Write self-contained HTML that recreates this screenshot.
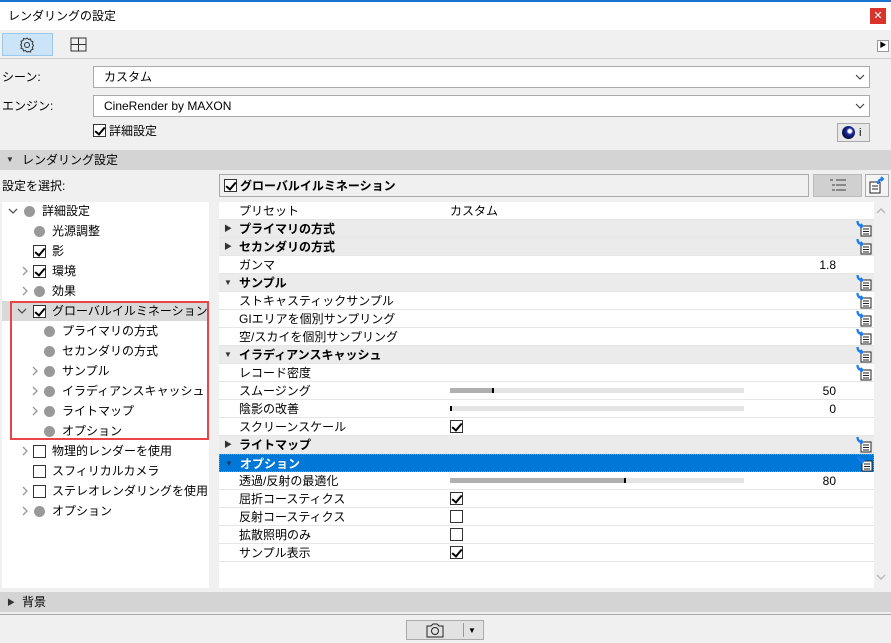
<!DOCTYPE html>
<html><head><meta charset="utf-8"><style>
*{box-sizing:border-box;margin:0;padding:0}
body{width:891px;height:643px;overflow:hidden;background:#f0f0f0;font-family:"Liberation Sans","Noto Sans CJK JP",sans-serif;font-size:12px;color:#000;position:relative}
.a{position:absolute}
.t{position:absolute;white-space:nowrap;line-height:14px}
.cb{position:absolute;width:13px;height:13px;border:1px solid #333;background:#fff}
.cb.on::after{content:"";position:absolute;left:3px;top:0px;width:4px;height:8px;border:solid #000;border-width:0 2px 2px 0;transform:rotate(40deg)}
.dot{position:absolute;width:11px;height:11px;border-radius:50%;background:#999}
.chev{position:absolute;width:10px;height:10px}
.row{position:absolute;left:219px;width:655px;height:18px;border-bottom:1px solid #e6e6e6;background:#fff}
.row.h{background:#ebebeb;font-weight:bold}
.ic{position:absolute;left:637px;top:1px;width:16px;height:16px}
.sl{position:absolute;left:231px;top:6px;width:294px;height:5px;background:#e4e4e4}
</style></head><body>
<div class="a" style="left:0;top:0;width:891px;height:2px;background:#1a73d0"></div>
<div class="a" style="left:0;top:2px;width:891px;height:28px;background:#fff"></div>
<div class="t" style="left:8px;top:9px">レンダリングの設定</div>
<div class="a" style="left:870px;top:8px;width:16px;height:16px;background:#d9342b;color:#fff;font-size:11px;text-align:center;line-height:16px">✕</div>
<div class="a" style="left:2px;top:33px;width:51px;height:23px;background:#cce4f7;border:1px solid #99c9ef"></div>
<svg class="a" style="left:18px;top:36px" width="18" height="18" viewBox="0 0 18 18"><circle cx="9" cy="9" r="2.5" fill="none" stroke="#333"/><path d="M9 2l1.5 1.5 2-.5.5 2 2 .8-.7 2 1.2 1.7-1.2 1.7.7 2-2 .8-.5 2-2-.5L9 16l-1.5-1.5-2 .5-.5-2-2-.8.7-2L2.5 9l1.2-1.7-.7-2 2-.8.5-2 2 .5z" fill="none" stroke="#333"/></svg>
<svg class="a" style="left:70px;top:37px" width="18" height="16"><rect x="1" y="1" width="15" height="13" fill="none" stroke="#333"/><path d="M8.5 1v13M1 7.5h15" stroke="#333"/></svg>
<div class="a" style="left:877px;top:40px;width:12px;height:12px;border:1px solid #999;background:#fff;font-size:7px;line-height:10px;text-align:center">▶</div>
<div class="a" style="left:0;top:58px;width:891px;height:1px;background:#ccc"></div>
<div class="t" style="left:2px;top:70px">シーン:</div>
<div class="a" style="left:93px;top:66px;width:777px;height:22px;background:#fff;border:1px solid #aaa"></div>
<div class="t" style="left:104px;top:70px">カスタム</div>
<svg class="a" style="left:855px;top:74px" width="10" height="6"><path d="M1 1l4 4 4-4" fill="none" stroke="#333"/></svg>
<div class="t" style="left:2px;top:99px">エンジン:</div>
<div class="a" style="left:93px;top:95px;width:777px;height:22px;background:#fff;border:1px solid #aaa"></div>
<div class="t" style="left:104px;top:99px">CineRender by MAXON</div>
<svg class="a" style="left:855px;top:103px" width="10" height="6"><path d="M1 1l4 4 4-4" fill="none" stroke="#333"/></svg>
<div class="cb on" style="left:93px;top:124px"></div>
<div class="t" style="left:109px;top:124px">詳細設定</div>
<div class="a" style="left:837px;top:123px;width:33px;height:19px;border:1px solid #aaa;background:#e8e8e8"></div>
<div class="a" style="left:842px;top:126px;width:13px;height:13px;border-radius:50%;background:radial-gradient(circle at 60% 40%,#fff 0 15%,#1a2a9a 30%,#0a0a40 70%)"></div>
<div class="t" style="left:859px;top:126px;font-size:11px">i</div>
<div class="a" style="left:0;top:150px;width:891px;height:20px;background:#d4d4d4"></div>
<div class="t" style="left:6px;top:153px;font-size:8px;color:#333">▼</div>
<div class="t" style="left:22px;top:153px">レンダリング設定</div>
<div class="t" style="left:2px;top:179px">設定を選択:</div>
<div class="a" style="left:2px;top:202px;width:207px;height:386px;background:#fff"></div>
<div class="a" style="left:2px;top:301px;width:207px;height:20px;background:#d9d9d9"></div>
<div class="a" style="left:10px;top:301px;width:199px;height:139px;border:2px solid #e8444a"></div>
<!-- tree -->
<svg class="chev" style="left:8px;top:206px"><path d="M1 3l4 4 4-4" fill="none" stroke="#555" stroke-width="1.3"/></svg><div class="dot" style="left:24px;top:206px"></div><div class="t" style="left:42px;top:204px">詳細設定</div>
<div class="dot" style="left:34px;top:226px"></div><div class="t" style="left:52px;top:224px">光源調整</div>
<div class="cb on" style="left:33px;top:245px"></div><div class="t" style="left:52px;top:244px">影</div>
<svg class="chev" style="left:20px;top:266px"><path d="M3 1l4 4-4 4" fill="none" stroke="#999" stroke-width="1.3"/></svg><div class="cb on" style="left:33px;top:265px"></div><div class="t" style="left:52px;top:264px">環境</div>
<svg class="chev" style="left:20px;top:286px"><path d="M3 1l4 4-4 4" fill="none" stroke="#999" stroke-width="1.3"/></svg><div class="dot" style="left:34px;top:286px"></div><div class="t" style="left:52px;top:284px">効果</div>
<svg class="chev" style="left:17px;top:306px"><path d="M1 3l4 4 4-4" fill="none" stroke="#555" stroke-width="1.3"/></svg><div class="cb on" style="left:33px;top:305px"></div><div class="t" style="left:52px;top:304px">グローバルイルミネーション</div>
<div class="dot" style="left:44px;top:326px"></div><div class="t" style="left:62px;top:324px">プライマリの方式</div>
<div class="dot" style="left:44px;top:346px"></div><div class="t" style="left:62px;top:344px">セカンダリの方式</div>
<svg class="chev" style="left:30px;top:366px"><path d="M3 1l4 4-4 4" fill="none" stroke="#999" stroke-width="1.3"/></svg><div class="dot" style="left:44px;top:366px"></div><div class="t" style="left:62px;top:364px">サンプル</div>
<svg class="chev" style="left:30px;top:386px"><path d="M3 1l4 4-4 4" fill="none" stroke="#999" stroke-width="1.3"/></svg><div class="dot" style="left:44px;top:386px"></div><div class="t" style="left:62px;top:384px">イラディアンスキャッシュ</div>
<svg class="chev" style="left:30px;top:406px"><path d="M3 1l4 4-4 4" fill="none" stroke="#999" stroke-width="1.3"/></svg><div class="dot" style="left:44px;top:406px"></div><div class="t" style="left:62px;top:404px">ライトマップ</div>
<div class="dot" style="left:44px;top:426px"></div><div class="t" style="left:62px;top:424px">オプション</div>
<svg class="chev" style="left:20px;top:446px"><path d="M3 1l4 4-4 4" fill="none" stroke="#999" stroke-width="1.3"/></svg><div class="cb" style="left:33px;top:445px"></div><div class="t" style="left:52px;top:444px">物理的レンダーを使用</div>
<div class="cb" style="left:33px;top:465px"></div><div class="t" style="left:52px;top:464px">スフィリカルカメラ</div>
<svg class="chev" style="left:20px;top:486px"><path d="M3 1l4 4-4 4" fill="none" stroke="#999" stroke-width="1.3"/></svg><div class="cb" style="left:33px;top:485px"></div><div class="t" style="left:52px;top:484px">ステレオレンダリングを使用</div>
<svg class="chev" style="left:20px;top:506px"><path d="M3 1l4 4-4 4" fill="none" stroke="#999" stroke-width="1.3"/></svg><div class="dot" style="left:34px;top:506px"></div><div class="t" style="left:52px;top:504px">オプション</div>
<!-- right header -->
<div class="a" style="left:219px;top:174px;width:590px;height:23px;border:1px solid #aaa;background:#f0f0f0"></div>
<div class="cb on" style="left:224px;top:179px"></div>
<div class="t" style="left:240px;top:179px;font-weight:bold">グローバルイルミネーション</div>
<div class="a" style="left:813px;top:174px;width:49px;height:23px;border:1px solid #bbb;background:#d0d0d0"></div>
<svg class="a" style="left:829px;top:179px" width="18" height="13"><path d="M1 1h3M7 1h10M3 6h3M7 6h10M3 11h3M7 11h10" stroke="#888" stroke-width="2"/></svg>
<div class="a" style="left:865px;top:174px;width:24px;height:23px;border:1px solid #aaa;background:#f4f4f4"></div>
<svg class="a" style="left:868px;top:176px" width="18" height="18"><rect x="2" y="6" width="10" height="11" fill="#fff" stroke="#222"/><path d="M4 10h6M4 13h6" stroke="#222"/><path d="M10 8q0-5 5-5M13 1l2 2-2 2" fill="none" stroke="#1e7cf0" stroke-width="2"/></svg>
<!-- list -->
<div class="a" style="left:219px;top:202px;width:655px;height:386px;background:#fff"></div>
<div class="a" style="left:874px;top:202px;width:15px;height:386px;background:#f0f0f0"></div>
<svg class="a" style="left:876px;top:208px" width="10" height="6"><path d="M1 5l4-4 4 4" fill="none" stroke="#bbb" stroke-width="1.5"/></svg>
<svg class="a" style="left:876px;top:574px" width="10" height="6"><path d="M1 1l4 4 4-4" fill="none" stroke="#bbb" stroke-width="1.5"/></svg>
<div id="L"></div>
<!-- bottom -->
<div class="a" style="left:0;top:592px;width:891px;height:20px;background:#d4d4d4"></div>
<div class="t" style="left:7px;top:596px;font-size:8px;color:#333">▶</div>
<div class="t" style="left:22px;top:595px">背景</div>
<div class="a" style="left:0;top:614px;width:891px;height:1px;background:#aaa"></div>
<div class="a" style="left:406px;top:620px;width:78px;height:20px;border:1px solid #aaa;background:#e2e2e2"></div>
<div class="a" style="left:463px;top:623px;width:1px;height:14px;background:#999"></div>
<div class="t" style="left:468px;top:624px;font-size:8px">▼</div>
<svg class="a" style="left:425px;top:621px" width="20" height="18"><path d="M2 5h4l2-2h4l2 2h4v11H2z" fill="none" stroke="#222"/><circle cx="10" cy="10" r="3.5" fill="none" stroke="#222"/></svg>
<script>
var I='<svg class="ic" viewBox="0 0 16 16"><rect x="5" y="5" width="10" height="10" fill="#fff" stroke="#222"/><path d="M7 8h6M7 10.5h6M7 13h6" stroke="#222"/><path d="M1.5 0q0 5 5 5M4.5 3l2 2-2 2" fill="none" stroke="#1e7cf0" stroke-width="2.2"/></svg>';
var R=[["プリセット",0,"カスタム"],["プライマリの方式",1],["セカンダリの方式",1],["ガンマ",0,null,"1.8"],["サンプル",2],["ストキャスティックサンプル",0,"I"],["GIエリアを個別サンプリング",0,"I"],["空/スカイを個別サンプリング",0,"I"],["イラディアンスキャッシュ",2],["レコード密度",0,"I"],["スムージング",0,"S15","50"],["陰影の改善",0,"S0","0"],["スクリーンスケール",0,"C1"],["ライトマップ",1],["オプション",3],["透過/反射の最適化",0,"S60","80"],["屈折コースティクス",0,"C1"],["反射コースティクス",0,"C0"],["拡散照明のみ",0,"C0"],["サンプル表示",0,"C1"]];
var h="";R.forEach(function(r,i){var y=202+i*18;var s=r[1]==3?'background:#0078d7;color:#fff;font-weight:bold;border:1px dotted #d08030':'';
h+='<div class="row'+(r[1]==1||r[1]==2?' h':'')+'" style="top:'+y+'px;'+s+'">';
if(r[1]==1)h+='<span class="t" style="left:5px;top:2px;font-size:8px;color:#333">▶</span>';
if(r[1]==2)h+='<span class="t" style="left:5px;top:2px;font-size:8px;color:#333">▼</span>';
if(r[1]==3)h+='<span class="t" style="left:5px;top:2px;font-size:8px;color:#1a3a6a">▼</span>';
h+='<span class="t" style="left:20px;top:2px">'+r[0]+'</span>';
if(r[1])h+=I;
if(r[2]=="I")h+=I;else if(r[2]&&r[2][0]=="S"){var p=+r[2].slice(1);h+='<div class="sl"><div style="width:'+p+'%;height:5px;background:#b0b0b0;border-right:2px solid #000"></div></div>';}
else if(r[2]&&r[2][0]=="C")h+='<div class="cb'+(r[2]=="C1"?' on':'')+'" style="left:231px;top:2px"></div>';
else if(r[2])h+='<span class="t" style="left:231px;top:2px">'+r[2]+'</span>';
if(r[3])h+='<span class="t" style="right:38px;top:2px">'+r[3]+'</span>';
h+='</div>';});document.getElementById("L").innerHTML=h;
</script>
</body></html>
